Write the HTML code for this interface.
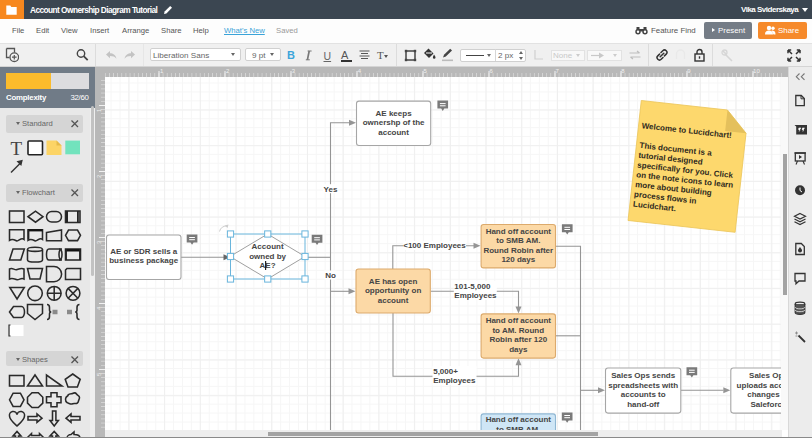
<!DOCTYPE html>
<html><head><meta charset="utf-8">
<style>
*{margin:0;padding:0;box-sizing:border-box}
html,body{width:812px;height:438px;overflow:hidden;background:#fff}
body{position:relative;font-family:"Liberation Sans",sans-serif;color:#333}
.a{position:absolute}
.t{position:absolute;white-space:nowrap;line-height:1}
#top{left:0;top:0;width:812px;height:19px;background:#3b4651}
#orange{left:0;top:0;width:24px;height:19px;background:#f7881f}
#menu{left:0;top:19px;width:812px;height:25px;background:#fdfdfd;border-bottom:1px solid #e2e2e2}
#tb{left:0;top:44px;width:812px;height:23px;background:#f0f0f0;border-bottom:1px solid #d4d4d4}
.mi{font-size:7.7px;color:#555;top:27px}
.sep{position:absolute;width:1px;background:#dcdcdc;top:44px;height:22px}
#lp{left:0;top:67px;width:95px;height:371px;background:#e8e8e8}
#cx{left:0;top:67px;width:95px;height:41px;background:#707b87}
.hdr{position:absolute;left:6px;width:77px;height:18px;background:#d5d5d5;border-radius:2px}
.hdr .tri{position:absolute;left:10px;top:7px;width:0;height:0;border-left:2.5px solid transparent;border-right:2.5px solid transparent;border-top:3px solid #666}
.hdr .lbl{position:absolute;left:16px;top:5px;font-size:7.6px;color:#666;white-space:nowrap;line-height:1}
.hdr .x{position:absolute;left:65px;top:3px}
#rulT{left:95px;top:67px;width:693px;height:10px;background:#b8b8b8}
#rulL{left:95px;top:77px;width:10px;height:361px;background:#b8b8b8}
#canvas{left:105px;top:77px;width:677px;height:353px;background-color:#fff;
 background-image:linear-gradient(#efefef 1px,transparent 1px),linear-gradient(90deg,#efefef 1px,transparent 1px),linear-gradient(#f6f6f6 1px,transparent 1px),linear-gradient(90deg,#f6f6f6 1px,transparent 1px);
 background-size:35.72px 35.72px,35.72px 35.72px,8.93px 8.93px,8.93px 8.93px;background-position:0 32.5px,23.4px 0,0 5.5px,5.6px 0;overflow:hidden}
#vtrack{left:781px;top:77px;width:7px;height:353px;background:#f9f9f9}
#vthumb{left:783px;top:154px;width:4px;height:141px;background:#a3a3a3}
#htrack{left:105px;top:430px;width:683px;height:8px;background:#eeeeee}
#hthumb{left:268px;top:432px;width:330px;height:4px;background:#a3a3a3}
#rp{left:788px;top:67px;width:24px;height:371px;background:#ececec;border-left:1px solid #d8d8d8}
</style></head><body>
<!-- top bar -->
<div id="top" class="a"></div>
<div id="orange" class="a"></div>
<svg class="a" style="left:6.3px;top:4.5px" width="11" height="10" viewBox="0 0 11 10"><path d="M0.3 0.5h4l1 1.5h5.4v7.7H0.3z" fill="#fff"/></svg>
<div class="t" style="left:30px;top:6px;font-size:8.3px;font-weight:bold;color:#fff;letter-spacing:-0.55px">Account Ownership Diagram Tutorial</div>
<svg class="a" style="left:163px;top:5px" width="10" height="10" viewBox="0 0 10 10"><path d="M1 9l0.6-2.4L7.2 1l1.8 1.8L3.4 8.4z" fill="#fff"/></svg>
<div class="t" style="left:741px;top:6px;font-size:8px;font-weight:bold;color:#fff;letter-spacing:-0.5px">Vika Sviderskaya</div>
<div class="a" style="left:801.5px;top:8px;width:0;height:0;border-left:3px solid transparent;border-right:3px solid transparent;border-top:4px solid #fff"></div>

<!-- menu -->
<div id="menu" class="a"></div>
<div class="t mi" style="left:12px">File</div>
<div class="t mi" style="left:36px">Edit</div>
<div class="t mi" style="left:61px">View</div>
<div class="t mi" style="left:90px">Insert</div>
<div class="t mi" style="left:122px">Arrange</div>
<div class="t mi" style="left:161px">Share</div>
<div class="t mi" style="left:193px">Help</div>
<div class="t mi" style="left:224px;color:#3aa3d8;text-decoration:underline">What's New</div>
<div class="t mi" style="left:276px;color:#999">Saved</div>
<svg class="a" style="left:635px;top:26px" width="13" height="9" viewBox="0 0 13 9"><circle cx="3" cy="5.8" r="2.7" fill="#444"/><circle cx="10" cy="5.8" r="2.7" fill="#444"/><rect x="1.5" y="1" width="3" height="4" fill="#444"/><rect x="8.5" y="1" width="3" height="4" fill="#444"/><rect x="4" y="3" width="5" height="2.5" fill="#444"/><circle cx="3" cy="5.8" r="1.2" fill="#fff"/><circle cx="10" cy="5.8" r="1.2" fill="#fff"/></svg>
<div class="t mi" style="left:651px;font-size:7.9px;color:#555">Feature Find</div>
<div class="a" style="left:704px;top:22px;width:48px;height:17px;background:#747c86;border-radius:2px"></div>
<div class="a" style="left:712px;top:28px;width:0;height:0;border-top:2.5px solid transparent;border-bottom:2.5px solid transparent;border-left:3.5px solid #fff"></div>
<div class="t" style="left:718px;top:27px;font-size:7.9px;color:#fff">Present</div>
<div class="a" style="left:758px;top:22px;width:49px;height:17px;background:#f68a2b;border-radius:2px"></div>
<svg class="a" style="left:765px;top:25px" width="11" height="10" viewBox="0 0 11 10"><circle cx="4" cy="3" r="2.2" fill="#fff"/><path d="M0 9.5c0-3 1.5-4 4-4s4 1 4 4z" fill="#fff"/><circle cx="8" cy="3.3" r="1.7" fill="#fff"/><path d="M6.5 5.5c2.5 0 4 .8 4 4h-2z" fill="#fff"/></svg>
<div class="t" style="left:778px;top:27px;font-size:7.9px;color:#fff">Share</div>

<!-- toolbar -->
<div id="tb" class="a"></div>
<div class="sep" style="left:95px"></div>
<!-- toolbar icons -->
<svg class="a" style="left:5px;top:47px" width="14" height="16" viewBox="0 0 14 16"><path d="M1.5 1.5h8v4" fill="none" stroke="#555" stroke-width="1.3"/><path d="M1.5 1.5v9h3" fill="none" stroke="#555" stroke-width="1.3"/><circle cx="9.3" cy="10.2" r="4.3" fill="none" stroke="#555" stroke-width="1.3"/><path d="M9.3 7.9v4.6M7 10.2h4.6" stroke="#555" stroke-width="1.2"/></svg>
<svg class="a" style="left:76px;top:48px" width="14" height="14" viewBox="0 0 14 14"><circle cx="5" cy="5.5" r="3.7" fill="none" stroke="#444" stroke-width="1.4"/><path d="M7.7 8.2l4 4" stroke="#444" stroke-width="1.8"/></svg>
<svg class="a" style="left:105px;top:50px" width="32" height="10" viewBox="0 0 32 10"><path d="M1 4.5L5 1v2.2c3 0 5.5 1.3 6.5 5.5C10 6.6 8 6 5 6v2.2z" fill="#c3c3c3"/><path d="M30 4.5L26 1v2.2c-3 0-5.5 1.3-6.5 5.5C21 6.6 23 6 26 6v2.2z" fill="#c3c3c3"/></svg>
<div class="sep" style="left:143px;background:#e6e6e6"></div>
<div class="a" style="left:150px;top:48px;width:91px;height:13px;background:#fff;border:1px solid #d0d0d0;border-radius:2px"></div>
<div class="t" style="left:153px;top:52px;font-size:8.1px;color:#666">Liberation Sans</div>
<div class="a" style="left:231px;top:53px;width:0;height:0;border-left:2.5px solid transparent;border-right:2.5px solid transparent;border-top:3.5px solid #666"></div>
<div class="a" style="left:245px;top:48px;width:36px;height:13px;background:#fff;border:1px solid #d0d0d0;border-radius:2px"></div>
<div class="t" style="left:252px;top:52px;font-size:8.1px;color:#666">9 pt</div>
<div class="a" style="left:270px;top:53px;width:0;height:0;border-left:2.5px solid transparent;border-right:2.5px solid transparent;border-top:3.5px solid #666"></div>
<div class="t" style="left:287px;top:50px;font-size:11px;font-weight:bold;color:#3ba4da">B</div>
<svg class="a" style="left:305px;top:50px" width="8" height="11" viewBox="0 0 8 11"><path d="M4.2 1L2.4 9.8" stroke="#777" stroke-width="1.7"/><path d="M2.6 1h4M0.8 9.8h4" stroke="#777" stroke-width="1"/></svg>
<div class="t" style="left:323.5px;top:50.5px;font-size:10.5px;color:#666;text-decoration:underline">U</div>
<div class="t" style="left:341px;top:50px;font-size:11px;color:#555">A</div>
<div class="a" style="left:340.5px;top:59.5px;width:11px;height:2px;background:#333"></div>
<svg class="a" style="left:359px;top:50px" width="11" height="10" viewBox="0 0 11 10"><path d="M0.5 1h10M2 3.5h7M0.5 6h10M2 8.5h7" stroke="#555" stroke-width="1.2"/></svg>
<div class="t" style="left:377px;top:50px;font-size:11px;color:#555;font-family:'Liberation Serif',serif">T</div>
<div class="a" style="left:384px;top:55px;width:0;height:0;border-left:2.5px solid transparent;border-right:2.5px solid transparent;border-top:3px solid #555"></div>
<div class="sep" style="left:396px"></div>
<svg class="a" style="left:404px;top:49px" width="13" height="13" viewBox="0 0 13 13"><rect x="2" y="2" width="9" height="9" fill="none" stroke="#444" stroke-width="1.5"/><rect x="0.8" y="0.8" width="2.4" height="2.4" fill="#444"/><rect x="9.8" y="0.8" width="2.4" height="2.4" fill="#444"/><rect x="0.8" y="9.8" width="2.4" height="2.4" fill="#444"/><rect x="9.8" y="9.8" width="2.4" height="2.4" fill="#444"/></svg>
<svg class="a" style="left:423px;top:48px" width="13" height="11" viewBox="0 0 13 11"><path d="M1 5l4.5-4.5 5 5L6 10z" fill="#333"/><path d="M3 5h6" stroke="#fff" stroke-width="1"/><path d="M11 6.5c1 1.5 1.5 2.2 1.5 3a1.3 1.3 0 0 1-2.6 0c0-.8.5-1.5 1.1-3z" fill="#333"/></svg>
<svg class="a" style="left:441px;top:48px" width="13" height="14" viewBox="0 0 13 14"><path d="M2 9.5l1-2.8 6.2-6 1.8 1.8-6.2 6z" fill="#444"/><rect x="1" y="11.5" width="11" height="1.6" fill="#bbb"/></svg>
<div class="a" style="left:459.5px;top:48.5px;width:66px;height:13px;background:#fff;border:1px solid #d0d0d0;border-radius:2px"></div>
<div class="a" style="left:494.5px;top:49px;width:1px;height:12px;background:#d6d6d6"></div>
<div class="a" style="left:465.5px;top:54.5px;width:18.5px;height:1.2px;background:#444"></div>
<div class="a" style="left:487px;top:53.5px;width:0;height:0;border-left:2.5px solid transparent;border-right:2.5px solid transparent;border-top:3.5px solid #666"></div>
<div class="t" style="left:498px;top:52px;font-size:8.1px;color:#666">2 px</div>
<div class="a" style="left:519px;top:50.5px;width:0;height:0;border-left:2px solid transparent;border-right:2px solid transparent;border-bottom:3px solid #666"></div>
<div class="a" style="left:519px;top:56.5px;width:0;height:0;border-left:2px solid transparent;border-right:2px solid transparent;border-top:3px solid #666"></div>
<svg class="a" style="left:533px;top:49px" width="11" height="12" viewBox="0 0 11 12"><path d="M2 1v9h8" fill="none" stroke="#d0d0d0" stroke-width="1.2"/></svg>
<div class="a" style="left:550.5px;top:50px;width:34.5px;height:11px;background:#f8f8f8;border:1px solid #e2e2e2"></div>
<div class="t" style="left:553px;top:52px;font-size:8px;color:#c8c8c8">None</div>
<div class="a" style="left:576px;top:54px;width:0;height:0;border-left:2.5px solid transparent;border-right:2.5px solid transparent;border-top:3px solid #ccc"></div>
<div class="a" style="left:587px;top:50px;width:34.5px;height:11px;background:#f8f8f8;border:1px solid #e2e2e2"></div>
<svg class="a" style="left:591px;top:52px" width="14" height="7" viewBox="0 0 14 7"><path d="M0 3.5h9" stroke="#c8c8c8" stroke-width="1.2"/><path d="M8 0.5l5 3-5 3z" fill="#c8c8c8"/></svg>
<div class="a" style="left:612.5px;top:54px;width:0;height:0;border-left:2.5px solid transparent;border-right:2.5px solid transparent;border-top:3px solid #ccc"></div>
<svg class="a" style="left:629px;top:50px" width="12" height="10" viewBox="0 0 12 10"><path d="M0.5 3h10M8 1l2.5 2M11.5 7h-10M4 9L1.5 7" fill="none" stroke="#bdbdbd" stroke-width="1.2"/></svg>
<div class="sep" style="left:648px"></div>
<svg class="a" style="left:655px;top:48px" width="14" height="14" viewBox="0 0 14 14"><path d="M6 4.5l1.8-1.8a2.4 2.4 0 0 1 3.4 3.4L9.4 7.9M8 9.5l-1.8 1.8a2.4 2.4 0 0 1-3.4-3.4L4.6 6.1M5.2 8.8l3.6-3.6" fill="none" stroke="#333" stroke-width="1.5" stroke-linecap="round"/></svg>
<svg class="a" style="left:675px;top:49px" width="11" height="12" viewBox="0 0 11 12"><path d="M1.5 10V5a4 4 0 0 1 8 0v5" fill="none" stroke="#e9e9e9" stroke-width="1.5"/></svg>
<svg class="a" style="left:694px;top:48px" width="11" height="14" viewBox="0 0 11 14"><path d="M3 6V4a2.5 2.5 0 0 1 5 0v2" fill="none" stroke="#333" stroke-width="1.4"/><rect x="1" y="6" width="9" height="7" fill="none" stroke="#333" stroke-width="1.4"/><path d="M5.5 8.3v2.4" stroke="#333" stroke-width="1.4"/></svg>
<div class="sep" style="left:712px"></div>
<svg class="a" style="left:721px;top:49px" width="13" height="13" viewBox="0 0 13 13"><path d="M2 2l3 3M4 5l7 7" stroke="#d6d6d6" stroke-width="1.6"/><circle cx="3.5" cy="3.5" r="2.5" fill="none" stroke="#d6d6d6" stroke-width="1.3"/></svg>
<svg class="a" style="left:787px;top:49px" width="14" height="13" viewBox="0 0 14 13"><path d="M1 1l4 4M1 1v3.2M1 1h3.2M13 1l-4 4M13 1v3.2M13 1H9.8M1 12l4-4M1 12V8.8M1 12h3.2M13 12l-4-4M13 12V8.8M13 12H9.8" fill="none" stroke="#333" stroke-width="1.5"/></svg>


<!-- left panel -->
<div id="lp" class="a"></div>
<div id="cx" class="a"></div>
<div class="a" style="left:6px;top:73px;width:83px;height:16px;background:#dcdcdf"></div>
<div class="a" style="left:6px;top:73px;width:45px;height:16px;background:#fbbb2c"></div>
<div class="t" style="left:6px;top:93.5px;font-size:7.8px;font-weight:bold;color:#fff;letter-spacing:-0.2px">Complexity</div>
<div class="t" style="left:70.5px;top:93.5px;font-size:7.8px;color:#fff;letter-spacing:-0.3px">32/60</div>
<div class="a" style="left:90px;top:108px;width:5px;height:330px;background:#efefef"></div><div class="a" style="left:90.5px;top:106px;width:3.8px;height:170px;background:#c2c2c2;border-radius:2px"></div>

<div class="hdr" style="top:115px"><div class="tri"></div><div class="lbl">Standard</div></div>
<div class="hdr" style="top:184px"><div class="tri"></div><div class="lbl">Flowchart</div></div>
<div class="hdr" style="top:351px;height:15px"><div class="tri"></div><div class="lbl">Shapes</div></div>

<svg class="a" style="left:0;top:0" width="91" height="438" viewBox="0 0 91 438"><text x="10.5" y="155" font-family="Liberation Serif" font-size="19" fill="#444">T</text><rect x="28" y="141" width="14.5" height="13.8" rx="1" fill="#fff" stroke="#222" stroke-width="1.6"/><path d="M46.5 140.5h10l5 5v9.5h-15z" fill="#fcd466"/><path d="M56.5 140.5v5h5z" fill="#e5b94a"/><rect x="65.3" y="140.6" width="14.7" height="13.7" fill="#72e3bd"/><path d="M11 172.5l10-10" stroke="#333" stroke-width="1.4"/><path d="M22.8 159.8l-1.5 6.3-4.8-4.8z" fill="#333"/><rect x="9.5" y="211" width="14.5" height="11.5" fill="none" stroke="#2a2a2a" stroke-width="1.55"/><path d="M28 216.7l7.5-5.5 7.5 5.5-7.5 5.5z" fill="none" stroke="#2a2a2a" stroke-width="1.55"/><rect x="46.5" y="211.5" width="15" height="10.5" rx="5.2" fill="none" stroke="#2a2a2a" stroke-width="1.55"/><rect x="65.5" y="211" width="14.5" height="11.5" fill="none" stroke="#2a2a2a" stroke-width="1.55"/><path d="M66.5 211v11.5M67.5 211v11.5M78.7 211v11.5M77.5 211v11.5" stroke="#222" stroke-width="1"/><path d="M9.5 229.8h14.5v9.5c-3 -2.5 -5.5 2.5 -7.5 1.5s-4 -2.5 -7 -0.5z" fill="none" stroke="#2a2a2a" stroke-width="1.55"/><path d="M28 229.8h14.5v9.5c-3 -2.5 -5.5 2.5 -7.5 1.5s-4 -2.5 -7 -0.5z" fill="none" stroke="#2a2a2a" stroke-width="1.55"/><path d="M28 230.3h14.5" stroke="#111" stroke-width="2.2"/><path d="M28.6 230v9" stroke="#222" stroke-width="1.6"/><path d="M46.5 232.5l15-2.5v10.8h-15z" fill="none" stroke="#2a2a2a" stroke-width="1.55"/><path d="M65.5 235.3l3-5.3h9l3 5.3-3 5.3h-9z" fill="none" stroke="#2a2a2a" stroke-width="1.55"/><path d="M9.5 260l3.5-11h11.3l-3.5 11z" fill="none" stroke="#2a2a2a" stroke-width="1.55"/><path d="M27.5 249.5c0-3 15-3 15 0v10.5c0 2.8-15 2.8-15 0z" fill="none" stroke="#2a2a2a" stroke-width="1.55"/><path d="M27.5 249.5c0 2.5 15 2.5 15 0" fill="none" stroke="#2a2a2a" stroke-width="1.55"/><path d="M49 249h13c-2 0-3 2.5-3 5.5s1 5.5 3 5.5h-13c-2 0-2.5-2.5-2.5-5.5s.5-5.5 2.5-5.5z" fill="none" stroke="#2a2a2a" stroke-width="1.55"/><path d="M59 249c2 0 3 2.5 3 5.5s-1 5.5-3 5.5" fill="none" stroke="#2a2a2a" stroke-width="1.55"/><rect x="65.5" y="249" width="15" height="11" fill="none" stroke="#2a2a2a" stroke-width="1.55"/><path d="M65.5 250.3h15" stroke="#111" stroke-width="2.4"/><path d="M66.2 249v11M79.8 249v11" stroke="#222" stroke-width="1.4"/><path d="M9.5 269c3-1.8 5 1.5 7.5 0.6s4.5-2 7-0.6v10c-3-1.8-5 1.5-7.5 .6s-4.5-2-7-.6z" fill="none" stroke="#2a2a2a" stroke-width="1.55"/><path d="M27.5 268.5h15l-2.5 10.5h-10z" fill="none" stroke="#2a2a2a" stroke-width="1.55"/><path d="M46.5 266.5h7.5a7.6 7.6 0 0 1 0 15.2h-7.5z" fill="none" stroke="#2a2a2a" stroke-width="1.55"/><path d="M67 268.5h13.5v11h-15v-9.5z" fill="none" stroke="#2a2a2a" stroke-width="1.55"/><path d="M9.8 287.5h14.5l-7.25 11.5z" fill="none" stroke="#2a2a2a" stroke-width="1.55"/><circle cx="35" cy="293.3" r="7.3" fill="none" stroke="#2a2a2a" stroke-width="1.55"/><circle cx="54.2" cy="293.3" r="6.9" fill="none" stroke="#2a2a2a" stroke-width="1.55"/><path d="M54.2 286.4v13.8M47.3 293.3h13.8" fill="none" stroke="#2a2a2a" stroke-width="1.55"/><circle cx="73" cy="293.3" r="6.9" fill="none" stroke="#2a2a2a" stroke-width="1.55"/><path d="M68.1 288.4l9.8 9.8M77.9 288.4l-9.8 9.8" fill="none" stroke="#2a2a2a" stroke-width="1.55"/><path d="M9.5 312l4-5.5h8a3 5.5 0 0 1 0 11h-8z" fill="none" stroke="#2a2a2a" stroke-width="1.55"/><path d="M27.5 304.5h15v9l-7.5 6-7.5-6z" fill="none" stroke="#2a2a2a" stroke-width="1.55"/><path d="M47 304.5c2 0 2.5 1 2.5 3v2.5c0 1 .8 2 1.8 2-1 0-1.8 1-1.8 2v2.5c0 2-.5 3-2.5 3" fill="none" stroke="#2a2a2a" stroke-width="1.55"/><path d="M52.5 310.5h5M52.5 312h5M52.5 313.5h5" stroke="#8a8a8a" stroke-width="1.3"/><path d="M79.5 304.5c-2 0-2.5 1-2.5 3v2.5c0 1-.8 2-1.8 2 1 0 1.8 1 1.8 2v2.5c0 2 .5 3 2.5 3" fill="none" stroke="#2a2a2a" stroke-width="1.55"/><path d="M67 310.5h5M67 312h5M67 313.5h5" stroke="#8a8a8a" stroke-width="1.3"/><rect x="10" y="325" width="13.5" height="11" fill="#fff"/><path d="M10.5 325h-1.5v11h1.5" fill="none" stroke="#333" stroke-width="1.2"/><rect x="9.5" y="375.5" width="14.5" height="10.5" fill="none" stroke="#2a2a2a" stroke-width="1.55"/><path d="M27.5 386h15l-7.5-11z" fill="none" stroke="#2a2a2a" stroke-width="1.55"/><path d="M46.5 386h15.5l-15.5-11z" fill="none" stroke="#2a2a2a" stroke-width="1.55"/><path d="M72.7 374l7.5 5.3-2.8 7.6h-9.4l-2.8-7.6z" fill="none" stroke="#2a2a2a" stroke-width="1.55"/><path d="M9.5 399.8l3.6-6.6h7.3l3.6 6.6-3.6 6.6h-7.3z" fill="none" stroke="#2a2a2a" stroke-width="1.55"/><path d="M32 392.8h6.3l4.5 4.5v5.8l-4.5 4.5H32l-4.5-4.5v-5.8z" fill="none" stroke="#2a2a2a" stroke-width="1.55"/><path d="M51 392.8h6v4h4v6h-4v4h-6v-4h-4.5v-6h4.5z" fill="none" stroke="#2a2a2a" stroke-width="1.55"/><path d="M68 395c1.5-2 3.5-1 4.5-1.5s3-1 4 .5 3 1.5 3 3.5-1 2.5-1 3.5-1.5 3-3.5 2.5-2.5 1-4.5.5-2.5-1-3.5-1.5-1.5-2-1.5-3.5 1-2.5 2.5-3.5z" fill="none" stroke="#2a2a2a" stroke-width="1.55"/><path d="M17 426c-4-3.5-7.5-6.5-7.5-10a3.5 3.5 0 0 1 7.5-1.5 3.5 3.5 0 0 1 7.5 1.5c0 3.5-3.5 6.5-7.5 10z" fill="none" stroke="#2a2a2a" stroke-width="1.55"/><path d="M28 416.5h9v-2.5l5 4.2-5 4.2v-2.5h-9z" fill="none" stroke="#2a2a2a" stroke-width="1.55"/><path d="M52.5 411v9.5H50l4.2 5.5 4.2-5.5h-2.5V411z" fill="none" stroke="#2a2a2a" stroke-width="1.55"/><path d="M80 416.5h-9v-2.5l-5 4.2 5 4.2v-2.5h9z" fill="none" stroke="#2a2a2a" stroke-width="1.55"/><path d="M15.5 445v-9h-2.5l4-4.5 4 4.5h-2.5v9z" fill="none" stroke="#2a2a2a" stroke-width="1.55"/><path d="M28 437l3.5-3.5v2h8v-2l3.5 3.5-3.5 3.5v-2h-8v2z" fill="none" stroke="#2a2a2a" stroke-width="1.55"/><path d="M52.5 445v-9H50l4.2-4.5 4.2 4.5h-2.5v9z" fill="none" stroke="#2a2a2a" stroke-width="1.55"/><path d="M67 438c0-2 2-3.5 4-3.5l3-2.5v2.5c3 0 6 1 6 3.5" fill="none" stroke="#2a2a2a" stroke-width="1.55"/><path d="M71.5 120.5l6.5 6.5M78 120.5l-6.5 6.5" stroke="#555" stroke-width="1.3"/><path d="M71.5 189.5l6.5 6.5M78 189.5l-6.5 6.5" stroke="#555" stroke-width="1.3"/><path d="M71.5 356.5l6.5 6.5M78 356.5l-6.5 6.5" stroke="#555" stroke-width="1.3"/></svg>
<!-- rulers / canvas -->
<div id="rulT" class="a"></div>
<div id="rulL" class="a"></div>
<div class="a" style="left:105px;top:73px;width:677px;height:4px;background-image:linear-gradient(90deg,#d6d6d6 1px,transparent 1px);background-size:4.125px 4px;background-position:4px 0"></div>
<div class="a" style="left:105px;top:71px;width:677px;height:6px;background-image:linear-gradient(90deg,#f2f2f2 1px,transparent 1px);background-size:66px 6px;background-position:53.5px 0"></div>
<div class="a" style="left:101px;top:77px;width:4px;height:353px;background-image:linear-gradient(#d6d6d6 1px,transparent 1px);background-size:4px 4.125px;background-position:0 3.25px"></div>
<div class="a" style="left:99px;top:77px;width:6px;height:353px;background-image:linear-gradient(#f2f2f2 1px,transparent 1px);background-size:6px 66px;background-position:0 28px"></div>

<div class="t" style="left:160.0px;top:68px;font-size:6px;color:#f0f0f0">1</div><div class="t" style="left:225.9px;top:68px;font-size:6px;color:#f0f0f0">2</div><div class="t" style="left:291.8px;top:68px;font-size:6px;color:#f0f0f0">3</div><div class="t" style="left:357.7px;top:68px;font-size:6px;color:#f0f0f0">4</div><div class="t" style="left:423.6px;top:68px;font-size:6px;color:#f0f0f0">5</div><div class="t" style="left:489.5px;top:68px;font-size:6px;color:#f0f0f0">6</div><div class="t" style="left:555.4px;top:68px;font-size:6px;color:#f0f0f0">7</div><div class="t" style="left:621.3px;top:68px;font-size:6px;color:#f0f0f0">8</div><div class="t" style="left:687.2px;top:68px;font-size:6px;color:#f0f0f0">9</div><div class="t" style="left:753.1px;top:68px;font-size:6px;color:#f0f0f0">10</div><div class="t" style="left:96px;top:106.0px;font-size:6px;color:#f0f0f0;transform:rotate(-90deg);transform-origin:3px 3px">1</div><div class="t" style="left:96px;top:172.0px;font-size:6px;color:#f0f0f0;transform:rotate(-90deg);transform-origin:3px 3px">2</div><div class="t" style="left:96px;top:238.0px;font-size:6px;color:#f0f0f0;transform:rotate(-90deg);transform-origin:3px 3px">3</div><div class="t" style="left:96px;top:304.0px;font-size:6px;color:#f0f0f0;transform:rotate(-90deg);transform-origin:3px 3px">4</div><div class="t" style="left:96px;top:370.0px;font-size:6px;color:#f0f0f0;transform:rotate(-90deg);transform-origin:3px 3px">5</div>
<div id="canvas" class="a"></div>
<!--DIAGRAM--><svg class="a" style="left:105px;top:77px" width="677" height="353" viewBox="105 77 677 353" font-family="Liberation Sans" font-weight="bold" font-size="8"><path d="M181 257.3H226" fill="none" stroke="#959595" stroke-width="1.1"/><path d="M230 257.3l-6.5-3v6z" fill="#666"/><path d="M305 257.3H330.5" fill="none" stroke="#959595" stroke-width="1.1"/><path d="M330.5 430V122.8H350" fill="none" stroke="#959595" stroke-width="1.1"/><path d="M356 122.8l-7 -3v6z" fill="#959595"/><path d="M330.5 291.3H349" fill="none" stroke="#959595" stroke-width="1.1"/><path d="M355.5 291.3l-7 -3v6z" fill="#959595"/><path d="M392.8 269V245.8H474" fill="none" stroke="#959595" stroke-width="1.1"/><path d="M480.5 245.8l-7 -3v6z" fill="#959595"/><path d="M556 246.3H580.5V430" fill="none" stroke="#959595" stroke-width="1.1"/><path d="M580.5 390.3H598" fill="none" stroke="#959595" stroke-width="1.1"/><path d="M605 390.3l-7 -3v6z" fill="#959595"/><path d="M430.5 291.3H518.5V307" fill="none" stroke="#959595" stroke-width="1.1"/><path d="M518.5 313.5l-3 -7h6z" fill="#959595"/><path d="M393 313V376.3H518.5V365" fill="none" stroke="#959595" stroke-width="1.1"/><path d="M518.5 358.2l-3 7h6z" fill="#959595"/><path d="M556 335.8H580.5" fill="none" stroke="#959595" stroke-width="1.1"/><path d="M681 390.3H723.5" fill="none" stroke="#959595" stroke-width="1.1"/><path d="M730.3 390.3l-7 -3v6z" fill="#959595"/><rect x="323.0" y="184.2" width="15" height="9" fill="#fff"/><text x="330.5" y="191.6" text-anchor="middle" fill="#454545">Yes</text><rect x="324.5" y="270.5" width="12" height="9" fill="#fff"/><text x="330.5" y="277.9" text-anchor="middle" fill="#454545">No</text><rect x="403.0" y="241.0" width="63" height="9" fill="#fff"/><text x="434.5" y="248.4" text-anchor="middle" fill="#454545">&lt;100 Employees</text><rect x="453.8" y="280.8" width="43" height="19" fill="#fff"/><text x="454.3" y="288.6" text-anchor="start" fill="#454545">101-5,000</text><text x="454.3" y="298.1" text-anchor="start" fill="#454545">Employees</text><rect x="432.5" y="366.1" width="44" height="19" fill="#fff"/><text x="433.2" y="373.7" text-anchor="start" fill="#454545">5,000+</text><text x="433.2" y="383.2" text-anchor="start" fill="#454545">Employees</text><rect x="106.5" y="235.0" width="74.5" height="44.5" rx="2.5" fill="#fff" stroke="#a6a6a6" stroke-width="1.1"/><text x="143.7" y="253.8" text-anchor="middle" fill="#454545">AE or SDR sells a</text><text x="143.7" y="263.2" text-anchor="middle" fill="#454545">business package</text><path d="M186.7 234.5h10.7v8h-3.8l-1.55 2.3-1.55-2.3h-3.8z" fill="#7a7a7a"/><path d="M189.2 237.5h5.7M189.2 239.7h5.7" stroke="#fff" stroke-width="1"/><rect x="356.5" y="101.1" width="74.19999999999999" height="44.400000000000006" rx="2.5" fill="#fff" stroke="#a6a6a6" stroke-width="1.1"/><text x="393.6" y="115.6" text-anchor="middle" fill="#454545">AE keeps</text><text x="393.6" y="125.2" text-anchor="middle" fill="#454545">ownershp of the</text><text x="393.6" y="134.6" text-anchor="middle" fill="#454545">account</text><path d="M437.4 100.6h10.7v8h-3.8l-1.55 2.3-1.55-2.3h-3.8z" fill="#7a7a7a"/><path d="M439.9 103.6h5.7M439.9 105.8h5.7" stroke="#fff" stroke-width="1"/><rect x="356.0" y="269.0" width="74.30000000000001" height="44.0" rx="2.5" fill="#fcd9a6" stroke="#dcaa6c" stroke-width="1.1"/><text x="393.1" y="283.6" text-anchor="middle" fill="#454545">AE has open</text><text x="393.1" y="293.1" text-anchor="middle" fill="#454545">opportunity on</text><text x="393.1" y="302.6" text-anchor="middle" fill="#454545">account</text><rect x="481.1" y="224.5" width="74.39999999999998" height="43.39999999999998" rx="2.5" fill="#fcd9a6" stroke="#dcaa6c" stroke-width="1.1"/><text x="518.3" y="233.6" text-anchor="middle" fill="#454545">Hand off account</text><text x="518.3" y="243.1" text-anchor="middle" fill="#454545">to SMB AM.</text><text x="518.3" y="252.6" text-anchor="middle" fill="#454545">Round Robin after</text><text x="518.3" y="262.1" text-anchor="middle" fill="#454545">120 days</text><path d="M561.9 224.3h10.7v8h-3.8l-1.55 2.3-1.55-2.3h-3.8z" fill="#7a7a7a"/><path d="M564.4 227.3h5.7M564.4 229.5h5.7" stroke="#fff" stroke-width="1"/><rect x="481.1" y="313.9" width="74.39999999999998" height="44.200000000000045" rx="2.5" fill="#fcd9a6" stroke="#dcaa6c" stroke-width="1.1"/><text x="518.3" y="323.4" text-anchor="middle" fill="#454545">Hand off account</text><text x="518.3" y="332.9" text-anchor="middle" fill="#454545">to AM. Round</text><text x="518.3" y="342.4" text-anchor="middle" fill="#454545">Robin after 120</text><text x="518.3" y="351.9" text-anchor="middle" fill="#454545">days</text><rect x="481.1" y="413.9" width="74.39999999999998" height="45.60000000000002" rx="2.5" fill="#cfe6f6" stroke="#8fb7d3" stroke-width="1.1"/><text x="518.3" y="422.4" text-anchor="middle" fill="#454545">Hand off account</text><text x="518.3" y="431.9" text-anchor="middle" fill="#454545">to SMB AM.</text><path d="M561.8 412.5h10.7v8h-3.8l-1.55 2.3-1.55-2.3h-3.8z" fill="#7a7a7a"/><path d="M564.3 415.5h5.7M564.3 417.7h5.7" stroke="#fff" stroke-width="1"/><rect x="605.5" y="368.0" width="75.29999999999995" height="45.10000000000002" rx="2.5" fill="#fff" stroke="#a6a6a6" stroke-width="1.1"/><text x="643.2" y="378" text-anchor="middle" fill="#454545">Sales Ops sends</text><text x="643.2" y="387.5" text-anchor="middle" fill="#454545">spreadsheets with</text><text x="643.2" y="397" text-anchor="middle" fill="#454545">accounts to</text><text x="643.2" y="406.5" text-anchor="middle" fill="#454545">hand-off</text><path d="M686.5 367.2h10.7v8h-3.8l-1.55 2.3-1.55-2.3h-3.8z" fill="#7a7a7a"/><path d="M689.0 370.2h5.7M689.0 372.4h5.7" stroke="#fff" stroke-width="1"/><rect x="730.8" y="368.0" width="74.70000000000005" height="45.10000000000002" rx="2.5" fill="#fff" stroke="#a6a6a6" stroke-width="1.1"/><text x="768.4" y="378" text-anchor="middle" fill="#454545">Sales Ops</text><text x="768.4" y="387.5" text-anchor="middle" fill="#454545">uploads account</text><text x="768.4" y="397" text-anchor="middle" fill="#454545">changes to</text><text x="768.4" y="406.5" text-anchor="middle" fill="#454545">Saleforce</text><path d="M230 256.5L267.6 234L305 256.5L267.6 279z" fill="#fff" stroke="#a0a0a0" stroke-width="1"/><text x="267.6" y="249" text-anchor="middle" fill="#454545">Account</text><text x="267.6" y="258.5" text-anchor="middle" fill="#454545">owned by</text><text x="267.6" y="268" text-anchor="middle" fill="#454545">AE?</text><rect x="265" y="261" width="1.2" height="9" fill="#222"/><path d="M311.7 234.7h10.7v8h-3.8l-1.55 2.3-1.55-2.3h-3.8z" fill="#7a7a7a"/><path d="M314.2 237.7h5.7M314.2 239.89999999999998h5.7" stroke="#fff" stroke-width="1"/><rect x="230.5" y="234" width="74.5" height="45" fill="none" stroke="#69b5dc" stroke-width="1"/><rect x="227.4" y="230.9" width="6.2" height="6.2" fill="#fff" stroke="#69b5dc" stroke-width="1"/><rect x="227.4" y="253.4" width="6.2" height="6.2" fill="#fff" stroke="#69b5dc" stroke-width="1"/><rect x="227.4" y="275.9" width="6.2" height="6.2" fill="#fff" stroke="#69b5dc" stroke-width="1"/><rect x="264.65" y="230.9" width="6.2" height="6.2" fill="#fff" stroke="#69b5dc" stroke-width="1"/><rect x="264.65" y="275.9" width="6.2" height="6.2" fill="#fff" stroke="#69b5dc" stroke-width="1"/><rect x="301.9" y="230.9" width="6.2" height="6.2" fill="#fff" stroke="#69b5dc" stroke-width="1"/><rect x="301.9" y="253.4" width="6.2" height="6.2" fill="#fff" stroke="#69b5dc" stroke-width="1"/><rect x="301.9" y="275.9" width="6.2" height="6.2" fill="#fff" stroke="#69b5dc" stroke-width="1"/><path d="M219.5 231.5a7 7 0 0 1 8-5.5" fill="none" stroke="#ccc" stroke-width="1"/><path d="M228.5 224.5l-1 3.5-2.5-2.5z" fill="#ccc"/><g transform="translate(641.3 100.5) rotate(6.3)"><path d="M0 0H86.7L107.7 21V120.7H0z" fill="#fdd86d" stroke="#ecc55a" stroke-width="0.8"/><path d="M86.7 0L107.7 21H86.7z" fill="#e4c05c"/><text x="3.2" y="27.5" fill="#2f2a20">Welcome to Lucidchart!</text><text x="3.2" y="47.3" fill="#2f2a20">This document is a</text><text x="3.2" y="57.15" fill="#2f2a20">tutorial designed</text><text x="3.2" y="67" fill="#2f2a20">specifically for you. Click</text><text x="3.2" y="76.85" fill="#2f2a20">on the note icons to learn</text><text x="3.2" y="86.7" fill="#2f2a20">more about building</text><text x="3.2" y="96.55" fill="#2f2a20">process flows in</text><text x="3.2" y="106.4" fill="#2f2a20">Lucidchart.</text></g></svg><!--/DIAGRAM-->
<div id="vtrack" class="a"></div>
<div id="vthumb" class="a"></div>
<div id="htrack" class="a"></div>
<div id="hthumb" class="a"></div>

<!-- right panel -->
<div id="rp" class="a"></div>
<svg class="a" style="left:789px;top:67px" width="23" height="371" viewBox="789 67 23 371">
<path d="M799.5 73.5l-3.2 3.2 3.2 3.2M804.5 73.5l-3.2 3.2 3.2 3.2" fill="none" stroke="#777" stroke-width="1.1"/>
<path d="M795.8 95.5h5.5l3 3v7.2h-8.5z" fill="none" stroke="#333" stroke-width="1.3"/><path d="M801 95.5v3.3h3.3" fill="none" stroke="#333" stroke-width="1"/>
<path d="M794.5 125h12.5v9.6h-10.8v-8z" fill="#333"/><path d="M801 128h-2.2v2h1.2l-.8 1.6M804.6 128h-2.2v2h1.2l-.8 1.6" fill="#fff" stroke="#fff" stroke-width="0.6"/>
<rect x="795.3" y="153" width="9.8" height="8" fill="none" stroke="#333" stroke-width="1.3"/><path d="M794.5 153h11.4" stroke="#333" stroke-width="1.5"/><path d="M799 155v4l3-2z" fill="#333"/><path d="M797.5 161l-1.5 3.5M803 161l1.5 3.5" stroke="#333" stroke-width="1.1"/>
<circle cx="800" cy="190.2" r="5" fill="#333"/><path d="M800 187.5v3l2 1.5" fill="none" stroke="#fff" stroke-width="1"/>
<path d="M800 213.5l5.5 2.8-5.5 2.8-5.5-2.8z" fill="none" stroke="#333" stroke-width="1.2"/><path d="M794.5 219l5.5 2.8 5.5-2.8M794.5 221.8l5.5 2.8 5.5-2.8" fill="none" stroke="#333" stroke-width="1.2"/>
<path d="M795.8 243.5h5.5l3 3v8h-8.5z" fill="none" stroke="#333" stroke-width="1.3"/><path d="M800 247c1.4 1.8 2 2.6 2 3.5a2 2 0 0 1-4 0c0-.9.6-1.7 2-3.5z" fill="#333"/>
<path d="M795 273.5h10v7.5h-6l-3 2.8v-2.8h-1z" fill="none" stroke="#333" stroke-width="1.3"/>
<ellipse cx="800" cy="304" rx="4.8" ry="1.8" fill="none" stroke="#333" stroke-width="1.2"/><path d="M795.2 304v8.5c0 2.4 9.6 2.4 9.6 0V304" fill="#555" stroke="#333" stroke-width="1.2"/><path d="M795.2 307.2c0 2.2 9.6 2.2 9.6 0M795.2 310c0 2.2 9.6 2.2 9.6 0" fill="none" stroke="#ddd" stroke-width="0.9"/>
<path d="M798.5 335.5l6.5 6.5" stroke="#333" stroke-width="1.8"/><path d="M795 333h3M796.5 331.5v3M795.5 336h2" stroke="#888" stroke-width="0.9"/>
</svg>

<div class="a" style="left:782px;top:430px;width:6px;height:7px;background:#fff"></div>
<div class="a" style="left:0;top:437px;width:812px;height:1px;background:#8a8a8a"></div>
</body></html>
